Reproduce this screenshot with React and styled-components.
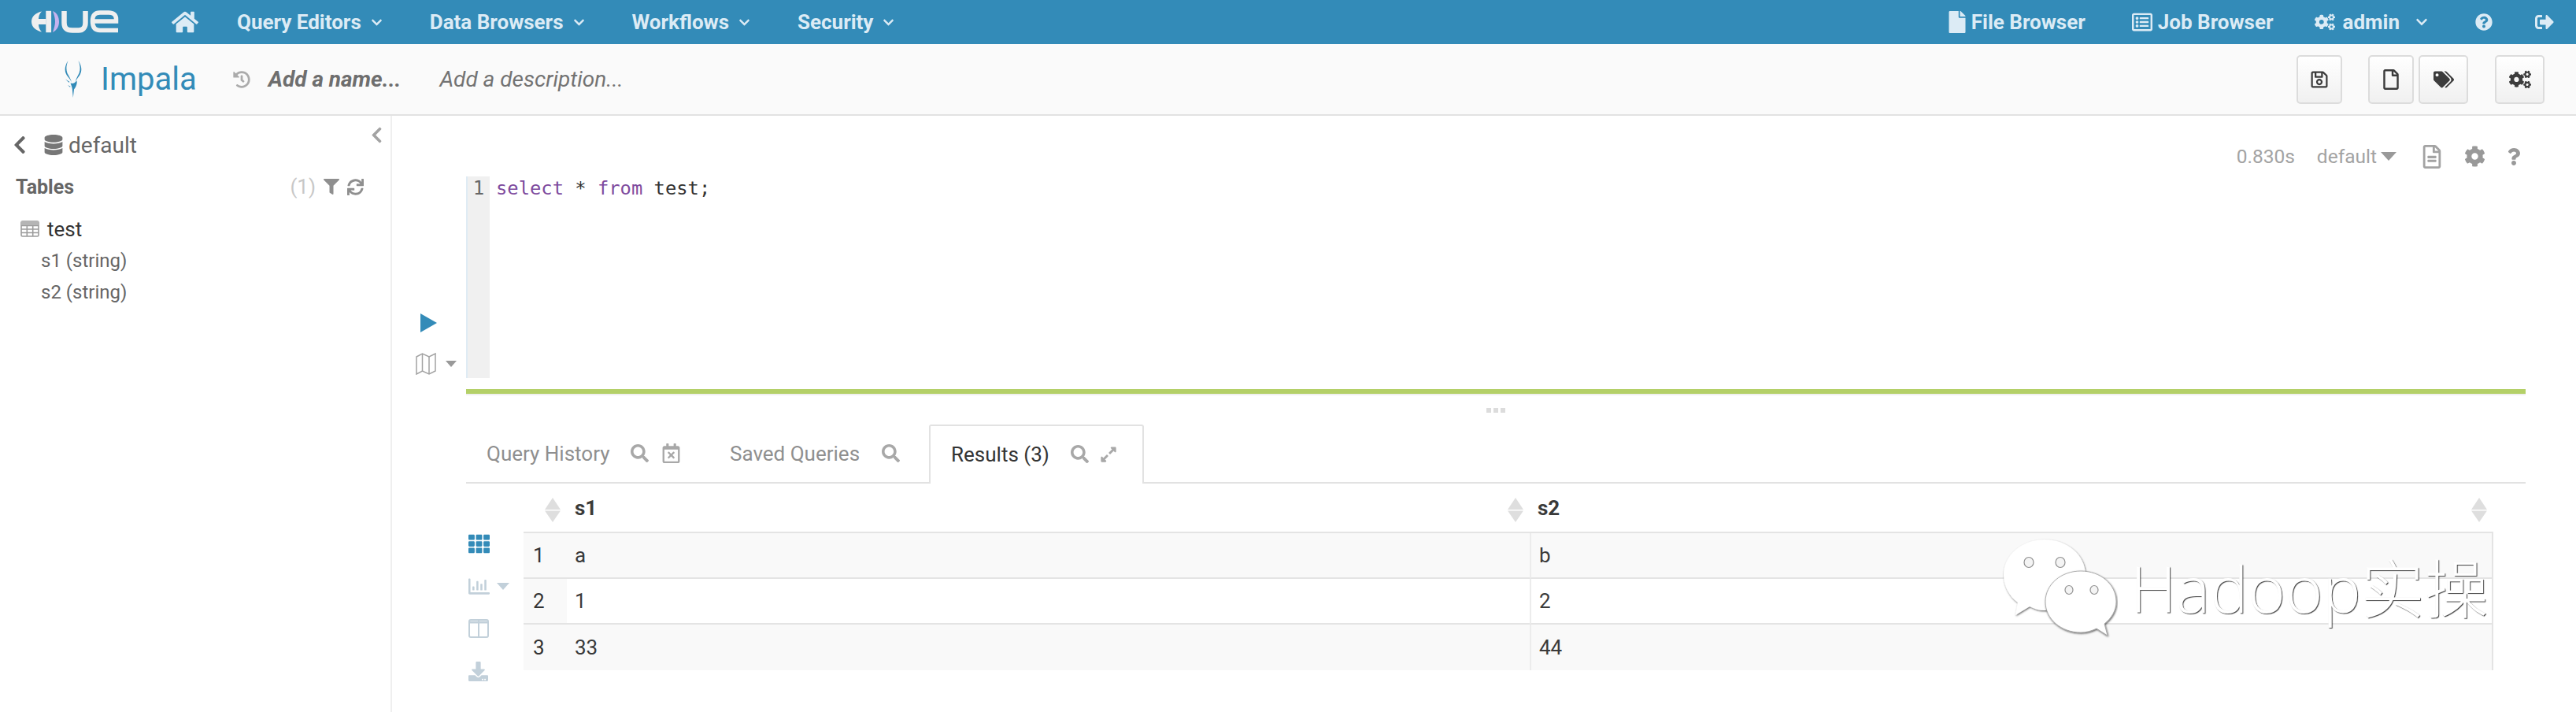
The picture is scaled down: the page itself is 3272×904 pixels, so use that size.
import React from 'react';
import styled, { createGlobalStyle } from 'styled-components';
import {
  FaHome, FaChevronDown, FaFile, FaRegListAlt, FaCogs, FaQuestionCircle, FaSignOutAlt,
  FaHistory, FaRegSave, FaRegFile, FaTags, FaRegFileAlt, FaCog, FaQuestion,
  FaChevronLeft, FaDatabase, FaFilter, FaSync, FaSearch,
  FaRegCalendarTimes, FaExpandAlt, FaTh, FaRegChartBar, FaDownload,
} from 'react-icons/fa';

const Global = createGlobalStyle`
  html, body { margin: 0; padding: 0; background: #fff; }
  body { width: 3272px; height: 904px; overflow: hidden; font-family: Roboto, "Liberation Sans", sans-serif; font-size: 26px; color: #333; }
  * { box-sizing: border-box; }
`;

const Page = styled.div`position: relative; width: 3272px; height: 904px; overflow: hidden;`;
const Glyph = styled.span`
  display: inline-flex; align-items: center; justify-content: center; flex: none;
  width: ${p => p.$w || p.$size}px; font-size: ${p => p.$size}px; color: ${p => p.$color || 'inherit'};
  margin-left: ${p => p.$before || 0}px; margin-right: ${p => p.$after || 0}px;
`;
const Caret = styled.span`
  display: inline-block; flex: none; width: 0; height: 0;
  border-left: ${p => p.$size}px solid transparent; border-right: ${p => p.$size}px solid transparent;
  border-top: ${p => p.$size + 1}px solid ${p => p.$color};
`;

/* top navigation */
const TopNav = styled.header`
  display: flex; align-items: center; height: 56px; padding: 0 28px 0 40px;
  background: #338bb8; color: #dcebf5; font-weight: 700; font-size: 26px;
`;
const HomeLink = styled.span`margin-left: 66px; display: inline-flex;`;
const Menu = styled.nav`display: flex; align-items: center; margin-left: 49px; gap: 60px;`;
const MenuItem = styled.span`display: inline-flex; align-items: center; gap: 12px; white-space: nowrap;`;
const RightNav = styled.div`display: flex; align-items: center; margin-left: auto;`;
const NavLink = styled.span`
  display: inline-flex; align-items: center; gap: ${p => p.$gap || 7}px; white-space: nowrap;
  margin-right: ${p => p.$after || 0}px;
`;

/* sub bar */
const SubBar = styled.div`
  display: flex; align-items: center; height: 91px; padding: 0 40px 0 82px;
  background: #fafafa; border-bottom: 2px solid #e2e2e2;
`;
const AppName = styled.span`margin-left: 23px; font-size: 40px; font-weight: 400; color: #338bb8; line-height: 1;`;
const NameField = styled.span`margin-left: 23px; font-style: italic; font-weight: 700; color: #6e6e6e; font-size: 28px;`;
const DescField = styled.span`margin-left: 49px; font-style: italic; color: #737373; font-size: 28px;`;
const Buttons = styled.div`display: flex; margin-left: auto;`;
const ToolButton = styled.button`
  display: flex; align-items: center; justify-content: center; padding: 0;
  width: ${p => p.$w}px; height: 62px; margin-left: ${p => p.$gap || 0}px;
  background: linear-gradient(#ffffff, #f0f0f0); border: 2px solid #dcdcdc; border-radius: 5px; color: #3c3c3c;
`;

/* body */
const Body = styled.div`display: flex; height: 757px;`;
const Sidebar = styled.aside`
  position: relative; width: 498px; flex: none; padding-top: 19px;
  border-right: 2px solid #efefef; color: #666;
`;
const CollapseHandle = styled.span`position: absolute; left: 467px; top: 12px; color: #a3a3a3;`;
const DbRow = styled.div`display: flex; align-items: center; height: 36px; padding-left: 12px; color: #666; font-size: 28px;`;
const DbName = styled.span`margin-left: 6px;`;
const TablesHead = styled.div`
  display: flex; align-items: center; height: 36px; margin-top: 17px; padding: 0 34px 0 20px;
  font-weight: 700; font-size: 25px; color: #666;
`;
const Count = styled.span`margin-left: auto; color: #c8c8c8; font-weight: 400; font-size: 26px;`;
const TableRow = styled.div`display: flex; align-items: center; gap: 10px; height: 40px; margin-top: 16px; padding: 0 0 1px 26px; color: #333; font-size: 26px;`;
const ColumnRow = styled.div`display: flex; align-items: center; height: 40px; padding-left: 52px; color: #666; font-size: 24px;`;

const Main = styled.main`flex: 1; min-width: 0; padding: 0 64px 0 30px;`;
const MetaRow = styled.div`
  display: flex; align-items: center; justify-content: flex-end; height: 77px; padding: 38px 2px 12px 0;
  color: #a3a3a3; font-size: 24.5px;
`;
const MetaText = styled.span`margin-right: ${p => p.$after}px;`;
const EditorRow = styled.section`display: flex; height: 256px;`;
const SnippetTools = styled.div`
  display: flex; flex-direction: column; align-items: flex-start; justify-content: flex-end;
  width: 64px; flex: none; padding-bottom: 4px; gap: 26px;
`;
const Play = styled.span`display: inline-flex; margin-left: 6px;`;
const MapTool = styled.span`display: inline-flex; align-items: center; gap: 12px;`;
const Gutter = styled.div`
  width: 30px; flex: none; background: #f0f0f0; border-left: 2px solid #dfebf4;
  font-family: "DejaVu Sans Mono", monospace; font-size: 24px; color: #666; text-align: center; padding-top: 1px; line-height: 28px;
`;
const Code = styled.pre`margin: 0; padding: 1px 0 0 8px; font-family: "DejaVu Sans Mono", monospace; font-size: 23.8px; line-height: 28px; color: #333;`;
const Keyword = styled.span`color: #7e4b9e;`;
const StatusBar = styled.div`height: 8px; margin: 14px 0 0 64px; background: #b4d068; border-bottom: 2px solid #f0f0f0;`;
const Splitter = styled.div`display: flex; align-items: center; justify-content: center; gap: 3px; height: 37px; margin-left: 64px;`;
const Dot = styled.i`display: block; width: 6px; height: 6px; background: #dcdcdc;`;

const Tabs = styled.div`display: flex; align-items: stretch; height: 75px; margin-left: 64px; border-bottom: 2px solid #e2e2e2;`;
const Tab = styled.div`
  display: flex; align-items: center; width: ${p => p.$w}px; padding-left: 26px;
  color: ${p => (p.$active ? '#333' : '#8f8f8f')}; font-size: 26px; white-space: nowrap;
  ${p => p.$active && `
    background: #fff; border: 2px solid #e2e2e2; border-bottom: 0; border-radius: 3px 3px 0 0;
    height: 75px; padding-bottom: 2px;
  `}
`;
const TabIcons = styled.span`display: inline-flex; align-items: center; margin-left: ${p => p.$gap}px; gap: ${p => p.$inner || 16}px; color: #a8a8a8;`;

const Results = styled.div`display: flex; align-items: flex-start; margin-left: 64px; padding-right: 41px;`;
const ViewIcons = styled.div`display: flex; flex-direction: column; width: 73px; flex: none; padding-top: 49px;`;
const ViewIcon = styled.span`
  display: flex; align-items: center; gap: 9px; height: 54px; padding-left: 3px;
  color: ${p => (p.$active ? '#338bb8' : '#c2d0da')};
`;
const Grid = styled.table`width: 2502px; flex: none; border-collapse: separate; border-spacing: 0; table-layout: fixed; font-size: 26px;`;
const HeadRow = styled.tr`height: 63px;`;
const Th = styled.th`
  position: relative; padding: 0 0 0 10px; text-align: left; font-weight: 700; color: #3a3a3a;
  border-bottom: 2px solid #e4e4e4; width: ${p => (p.$w ? `${p.$w}px` : 'auto')};
`;
const SortMark = styled.span`position: absolute; right: 8px; top: 18px; display: inline-flex;`;
const Tr = styled.tr`height: 58px;`;
const RowNum = styled.td`padding-left: 12px; background: #f9f9f9; border-bottom: 2px solid #e4e4e4;`;
const Td = styled.td`
  padding-left: 10px; color: #3a3a3a; border-bottom: 2px solid #e4e4e4;
  background: ${p => (p.$odd ? '#f9f9f9' : '#fff')};
  ${p => p.$last && 'border-left: 2px solid #ececec; border-right: 2px solid #e4e4e4;'}
`;
const LastRow = styled(Tr)`td { border-bottom: 0; }`;

/* watermark lying over the table */
const Watermark = styled.div`position: absolute; left: 2530px; top: 670px; display: flex; align-items: flex-start; pointer-events: none;`;
const MarkText = styled.span`
  margin: 22px 0 0 16px; font-family: "Open Sans", "Noto Sans CJK SC", sans-serif; font-weight: 300; font-size: 81px; line-height: 110px;
  color: #fff; white-space: nowrap; text-shadow: 1px 1px 1px rgba(0,0,0,.75);
`;

const HueLogo = () => (
  <svg width="112" height="30" viewBox="0 0 112 30">
    <path fill="#efefef" d="M13 1.5C5 3.5 0 8 0 14.5S5 25.5 13 27.5C10 24.5 9 21 9 18H18.500V11H9C9 8 10 4.500 13 1.500Z" />
    <rect x="18.3" y="0.8" width="6.8" height="27.4" fill="#efefef" />
    <path fill="#c6b3ee" d="M27 1C32 3 35 8 35 14.5S32 25.5 27 28C29 22 30 18 30 14.5S29 6 27 1Z" />
    <path fill="none" stroke="#efefef" strokeWidth="6.5" d="M41.5 1V16C41.5 23 45 25.5 52 25.5H60C65 25.5 68.5 22 68.5 16V1" />
    <path fill="none" stroke="#efefef" strokeWidth="5.5" d="M110 25.5H87C80 25.5 77.5 21 77.5 14S80 3 87 3H98C104 3 107.5 6 107.5 11V14H78" />
  </svg>
);

const ImpalaLogo = () => (
  <svg width="23" height="48" viewBox="0 0 23 48" style={{ flex: 'none' }}>
    <g fill="#338bb8">
      <path d="M4.500 0C.5 6-.5 12 2 17c2 4 5.500 6 7 11-1-5-3.500-8-5.500-12C1.800 11 2 6 4.500 0Z" />
      <path d="M17.500 0c4 6 5 12 2.500 17-2 4-5 6-6.500 11 .8-5 3-8 5-12 1.800-5 1.500-10-1-16Z" />
      <path d="M7.500 28.500c2.500 1 5 .5 8-3 .8 3-.8 8-3.500 11L10.800 47l-1-11c-.3-3-1.500-5-2.300-7.500Z" />
      <path d="M1 23.500l5.500 3.500-1 .8ZM4 31l3.500 1.800-.5 1Z" />
    </g>
  </svg>
);

const TableGridIcon = () => (
  <svg width="24" height="21" viewBox="0 0 24 21" fill="none" stroke="#9c9c9c" strokeWidth="1.6">
    <rect x="1" y="1" width="22" height="19" rx="1.5" />
    <path d="M1 6.500H23M1 11H23M1 15.500H23M8.300 6.500V20M15.700 6.500V20" />
    <rect x="1" y="1" width="22" height="5" fill="#b5b5b5" stroke="none" />
  </svg>
);

const MapIcon = () => (
  <svg width="26" height="28" viewBox="0 0 26 28" fill="none" stroke="#a3a3a3" strokeWidth="1.5">
    <path d="M1 5L8.500 1L17 5L25 1V23L17 27L8.500 23L1 27Z" />
    <path d="M8.500 1V23M17 5V27" />
  </svg>
);

const ColumnsIcon = () => (
  <svg width="26" height="24" viewBox="0 0 26 24" fill="none" stroke="#c2d0da" strokeWidth="2">
    <rect x="1" y="1" width="24" height="22" rx="2" />
    <path d="M13 1V23" />
    <path d="M1 4H25" strokeWidth="3" />
  </svg>
);

const SortIcon = () => (
  <svg width="20" height="31" viewBox="0 0 20 31" fill="#dedede">
    <path d="M10 0L20 15H0Z" />
    <path d="M10 31L20 16.500H0Z" />
  </svg>
);

const Bubbles = () => (
  <svg width="160" height="150" viewBox="0 0 160 150">
    <defs>
      <filter id="sh" x="-20%" y="-20%" width="140%" height="140%">
        <feDropShadow dx="0.8" dy="1.2" stdDeviation="1.3" floodColor="#000" floodOpacity="0.65" />
      </filter>
    </defs>
    <path filter="url(#sh)" fill="#fff" d="M33 95L30 111L48 100C54 103 60 105 67 105C96 105 119 85 119 60C119 35 96 15 67 15C38 15 15 35 15 60C15 74 22 87 33 95Z" />
    <path filter="url(#sh)" fill="#fff" stroke="#9a9a9a" strokeWidth="0.8" d="M133 128L147 137L143 122C152 115 158 105 158 94C158 72 138 55 113 55C88 55 68 72 68 94C68 116 88 133 113 133C120 133 127 131 133 128Z" />
    <g fill="#f4f4f4" stroke="#8f8f8f" strokeWidth="1.2">
      <ellipse cx="47" cy="44" rx="6" ry="6.500" /><ellipse cx="87" cy="44" rx="6" ry="6.500" />
      <ellipse cx="98" cy="79" rx="5" ry="5.500" /><ellipse cx="130" cy="79" rx="5" ry="5.500" />
    </g>
  </svg>
);

export default function App() {
  const menus = ['Query Editors', 'Data Browsers', 'Workflows', 'Security'];
  return (
    <Page>
      <Global />
      <TopNav>
        <HueLogo />
        <HomeLink><Glyph $size={34}><FaHome /></Glyph></HomeLink>
        <Menu>
          {menus.map(m => (
            <MenuItem key={m}>{m}<Glyph $size={15}><FaChevronDown /></Glyph></MenuItem>
          ))}
        </Menu>
        <RightNav>
          <NavLink $after={59}><Glyph $size={28} $w={22}><FaFile /></Glyph>File Browser</NavLink>
          <NavLink $after={51}><Glyph $size={26}><FaRegListAlt /></Glyph>Job Browser</NavLink>
          <NavLink $after={20}><Glyph $size={26} $w={30}><FaCogs /></Glyph>admin</NavLink>
          <NavLink $after={60}><Glyph $size={16}><FaChevronDown /></Glyph></NavLink>
          <NavLink $after={54}><Glyph $size={22}><FaQuestionCircle /></Glyph></NavLink>
          <NavLink><Glyph $size={24}><FaSignOutAlt /></Glyph></NavLink>
        </RightNav>
      </TopNav>

      <SubBar>
        <ImpalaLogo />
        <AppName>Impala</AppName>
        <Glyph $size={22} $color="#ababab" $before={46}><FaHistory /></Glyph>
        <NameField>Add a name...</NameField>
        <DescField>Add a description...</DescField>
        <Buttons>
          <ToolButton $w={58}><Glyph $size={24}><FaRegSave /></Glyph></ToolButton>
          <ToolButton $w={58} $gap={33}><Glyph $size={26}><FaRegFile /></Glyph></ToolButton>
          <ToolButton $w={63} $gap={6}><Glyph $size={26}><FaTags /></Glyph></ToolButton>
          <ToolButton $w={63} $gap={34}><Glyph $size={28}><FaCogs /></Glyph></ToolButton>
        </Buttons>
      </SubBar>

      <Body>
        <Sidebar>
          <CollapseHandle><Glyph $size={23}><FaChevronLeft /></Glyph></CollapseHandle>
          <DbRow>
            <Glyph $size={26}><FaChevronLeft /></Glyph>
            <Glyph $size={26} $before={17} $color="#777"><FaDatabase /></Glyph>
            <DbName>default</DbName>
          </DbRow>
          <TablesHead>
            Tables
            <Count>(1)</Count>
            <Glyph $size={20} $color="#8f8f8f" $before={10}><FaFilter /></Glyph>
            <Glyph $size={21} $color="#8f8f8f" $before={10}><FaSync /></Glyph>
          </TablesHead>
          <TableRow><TableGridIcon />test</TableRow>
          <ColumnRow>s1 (string)</ColumnRow>
          <ColumnRow>s2 (string)</ColumnRow>
        </Sidebar>

        <Main>
          <MetaRow>
            <MetaText $after={28}>0.830s</MetaText>
            <MetaText $after={5}>default</MetaText>
            <Caret $size={10} $color="#999" />
            <Glyph $size={30} $color="#a3a3a3" $before={30}><FaRegFileAlt /></Glyph>
            <Glyph $size={27} $color="#999" $before={26}><FaCog /></Glyph>
            <Glyph $size={22} $color="#999" $before={25} $after={2}><FaQuestion /></Glyph>
          </MetaRow>
          <EditorRow>
            <SnippetTools>
              <Play>
                <svg width="21" height="24" viewBox="0 0 21 24"><path d="M0 0L21 12L0 24Z" fill="#338bb8" /></svg>
              </Play>
              <MapTool>
                <MapIcon />
                <Caret $size={7} $color="#999" />
              </MapTool>
            </SnippetTools>
            <Gutter>1</Gutter>
            <Code><Keyword>select</Keyword> * <Keyword>from</Keyword> test;</Code>
          </EditorRow>
          <StatusBar />
          <Splitter><Dot /><Dot /><Dot /></Splitter>
          <Tabs>
            <Tab $w={309}>
              Query History
              <TabIcons $gap={26}>
                <Glyph $size={23}><FaSearch /></Glyph>
                <Glyph $size={25}><FaRegCalendarTimes /></Glyph>
              </TabIcons>
            </Tab>
            <Tab $w={279}>
              Saved Queries
              <TabIcons $gap={28}><Glyph $size={23}><FaSearch /></Glyph></TabIcons>
            </Tab>
            <Tab $w={273} $active>
              Results (3)
              <TabIcons $gap={27} $inner={14}>
                <Glyph $size={23}><FaSearch /></Glyph>
                <Glyph $size={22}><FaExpandAlt /></Glyph>
              </TabIcons>
            </Tab>
          </Tabs>
          <Results>
            <ViewIcons>
              <ViewIcon $active><Glyph $size={27}><FaTh /></Glyph></ViewIcon>
              <ViewIcon><Glyph $size={27}><FaRegChartBar /></Glyph><Caret $size={8} $color="#c2d0da" /></ViewIcon>
              <ViewIcon><ColumnsIcon /></ViewIcon>
              <ViewIcon><Glyph $size={25}><FaDownload /></Glyph></ViewIcon>
            </ViewIcons>
            <Grid>
              <thead>
                <HeadRow>
                  <Th $w={55}><SortMark><SortIcon /></SortMark></Th>
                  <Th $w={1223}>s1<SortMark><SortIcon /></SortMark></Th>
                  <Th>s2<SortMark><SortIcon /></SortMark></Th>
                </HeadRow>
              </thead>
              <tbody>
                <Tr><RowNum>1</RowNum><Td $odd>a</Td><Td $odd $last>b</Td></Tr>
                <Tr><RowNum>2</RowNum><Td>1</Td><Td $last>2</Td></Tr>
                <LastRow><RowNum>3</RowNum><Td $odd>33</Td><Td $odd $last>44</Td></LastRow>
              </tbody>
            </Grid>
          </Results>
        </Main>
      </Body>

      <Watermark>
        <Bubbles />
        <MarkText>Hadoop实操</MarkText>
      </Watermark>
    </Page>
  );
}
